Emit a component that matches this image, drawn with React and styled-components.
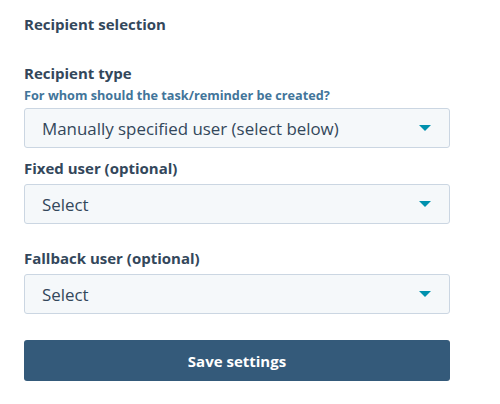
import React from 'react';
import styled, { createGlobalStyle } from 'styled-components';

const GlobalStyle = createGlobalStyle`
  body {
    margin: 0;
    background: #fff;
    font-family: "Open Sans", "Liberation Sans", sans-serif;
    color: #33475b;
  }
`;

const Panel = styled.div`
  width: 426px;
  padding: 14px 24px 0;
  display: flex;
  flex-direction: column;
`;

const Heading = styled.div`
  font-size: 15px;
  font-weight: 700;
  line-height: 20px;
  margin-bottom: 29px;
`;

const Field = styled.div`
  display: flex;
  flex-direction: column;
  margin-bottom: ${(p) => p.gap || 0}px;
`;

const Label = styled.div`
  font-size: 15px;
  font-weight: 700;
  line-height: 20px;
  margin-bottom: ${(p) => (p.tight ? 0 : 6)}px;
`;

const Hint = styled.div`
  font-size: 12.7px;
  font-weight: 700;
  line-height: 16px;
  color: #42759a;
  margin: 4px 0 5px;
`;

const SelectBox = styled.div`
  height: 40px;
  box-sizing: border-box;
  border: 1px solid #cbd6e2;
  border-radius: 3px;
  background: #f5f8fa;
  display: flex;
  align-items: center;
  justify-content: space-between;
  padding: 0 18px 0 17px;
  font-size: 16.9px;
  color: #33475b;
`;

const Caret = styled.span`
  width: 0;
  height: 0;
  border-left: 6px solid transparent;
  border-right: 6px solid transparent;
  border-top: 6px solid #0091ae;
`;

const SaveButton = styled.button`
  height: 41px;
  border: none;
  border-radius: 3px;
  background: #345a7a;
  color: #fff;
  font-family: inherit;
  font-size: 15px;
  font-weight: 700;
  cursor: pointer;
`;

const Select = ({ value }) => (
  <SelectBox>
    <span>{value}</span>
    <Caret />
  </SelectBox>
);

const App = () => (
  <>
    <GlobalStyle />
    <Panel>
      <Heading>Recipient selection</Heading>
      <Field gap={10}>
        <Label tight>Recipient type</Label>
        <Hint>For whom should the task/reminder be created?</Hint>
        <Select value="Manually specified user (select below)" />
      </Field>
      <Field gap={24}>
        <Label>Fixed user (optional)</Label>
        <Select value="Select" />
      </Field>
      <Field gap={26}>
        <Label>Fallback user (optional)</Label>
        <Select value="Select" />
      </Field>
      <SaveButton>Save settings</SaveButton>
    </Panel>
  </>
);

export default App;
